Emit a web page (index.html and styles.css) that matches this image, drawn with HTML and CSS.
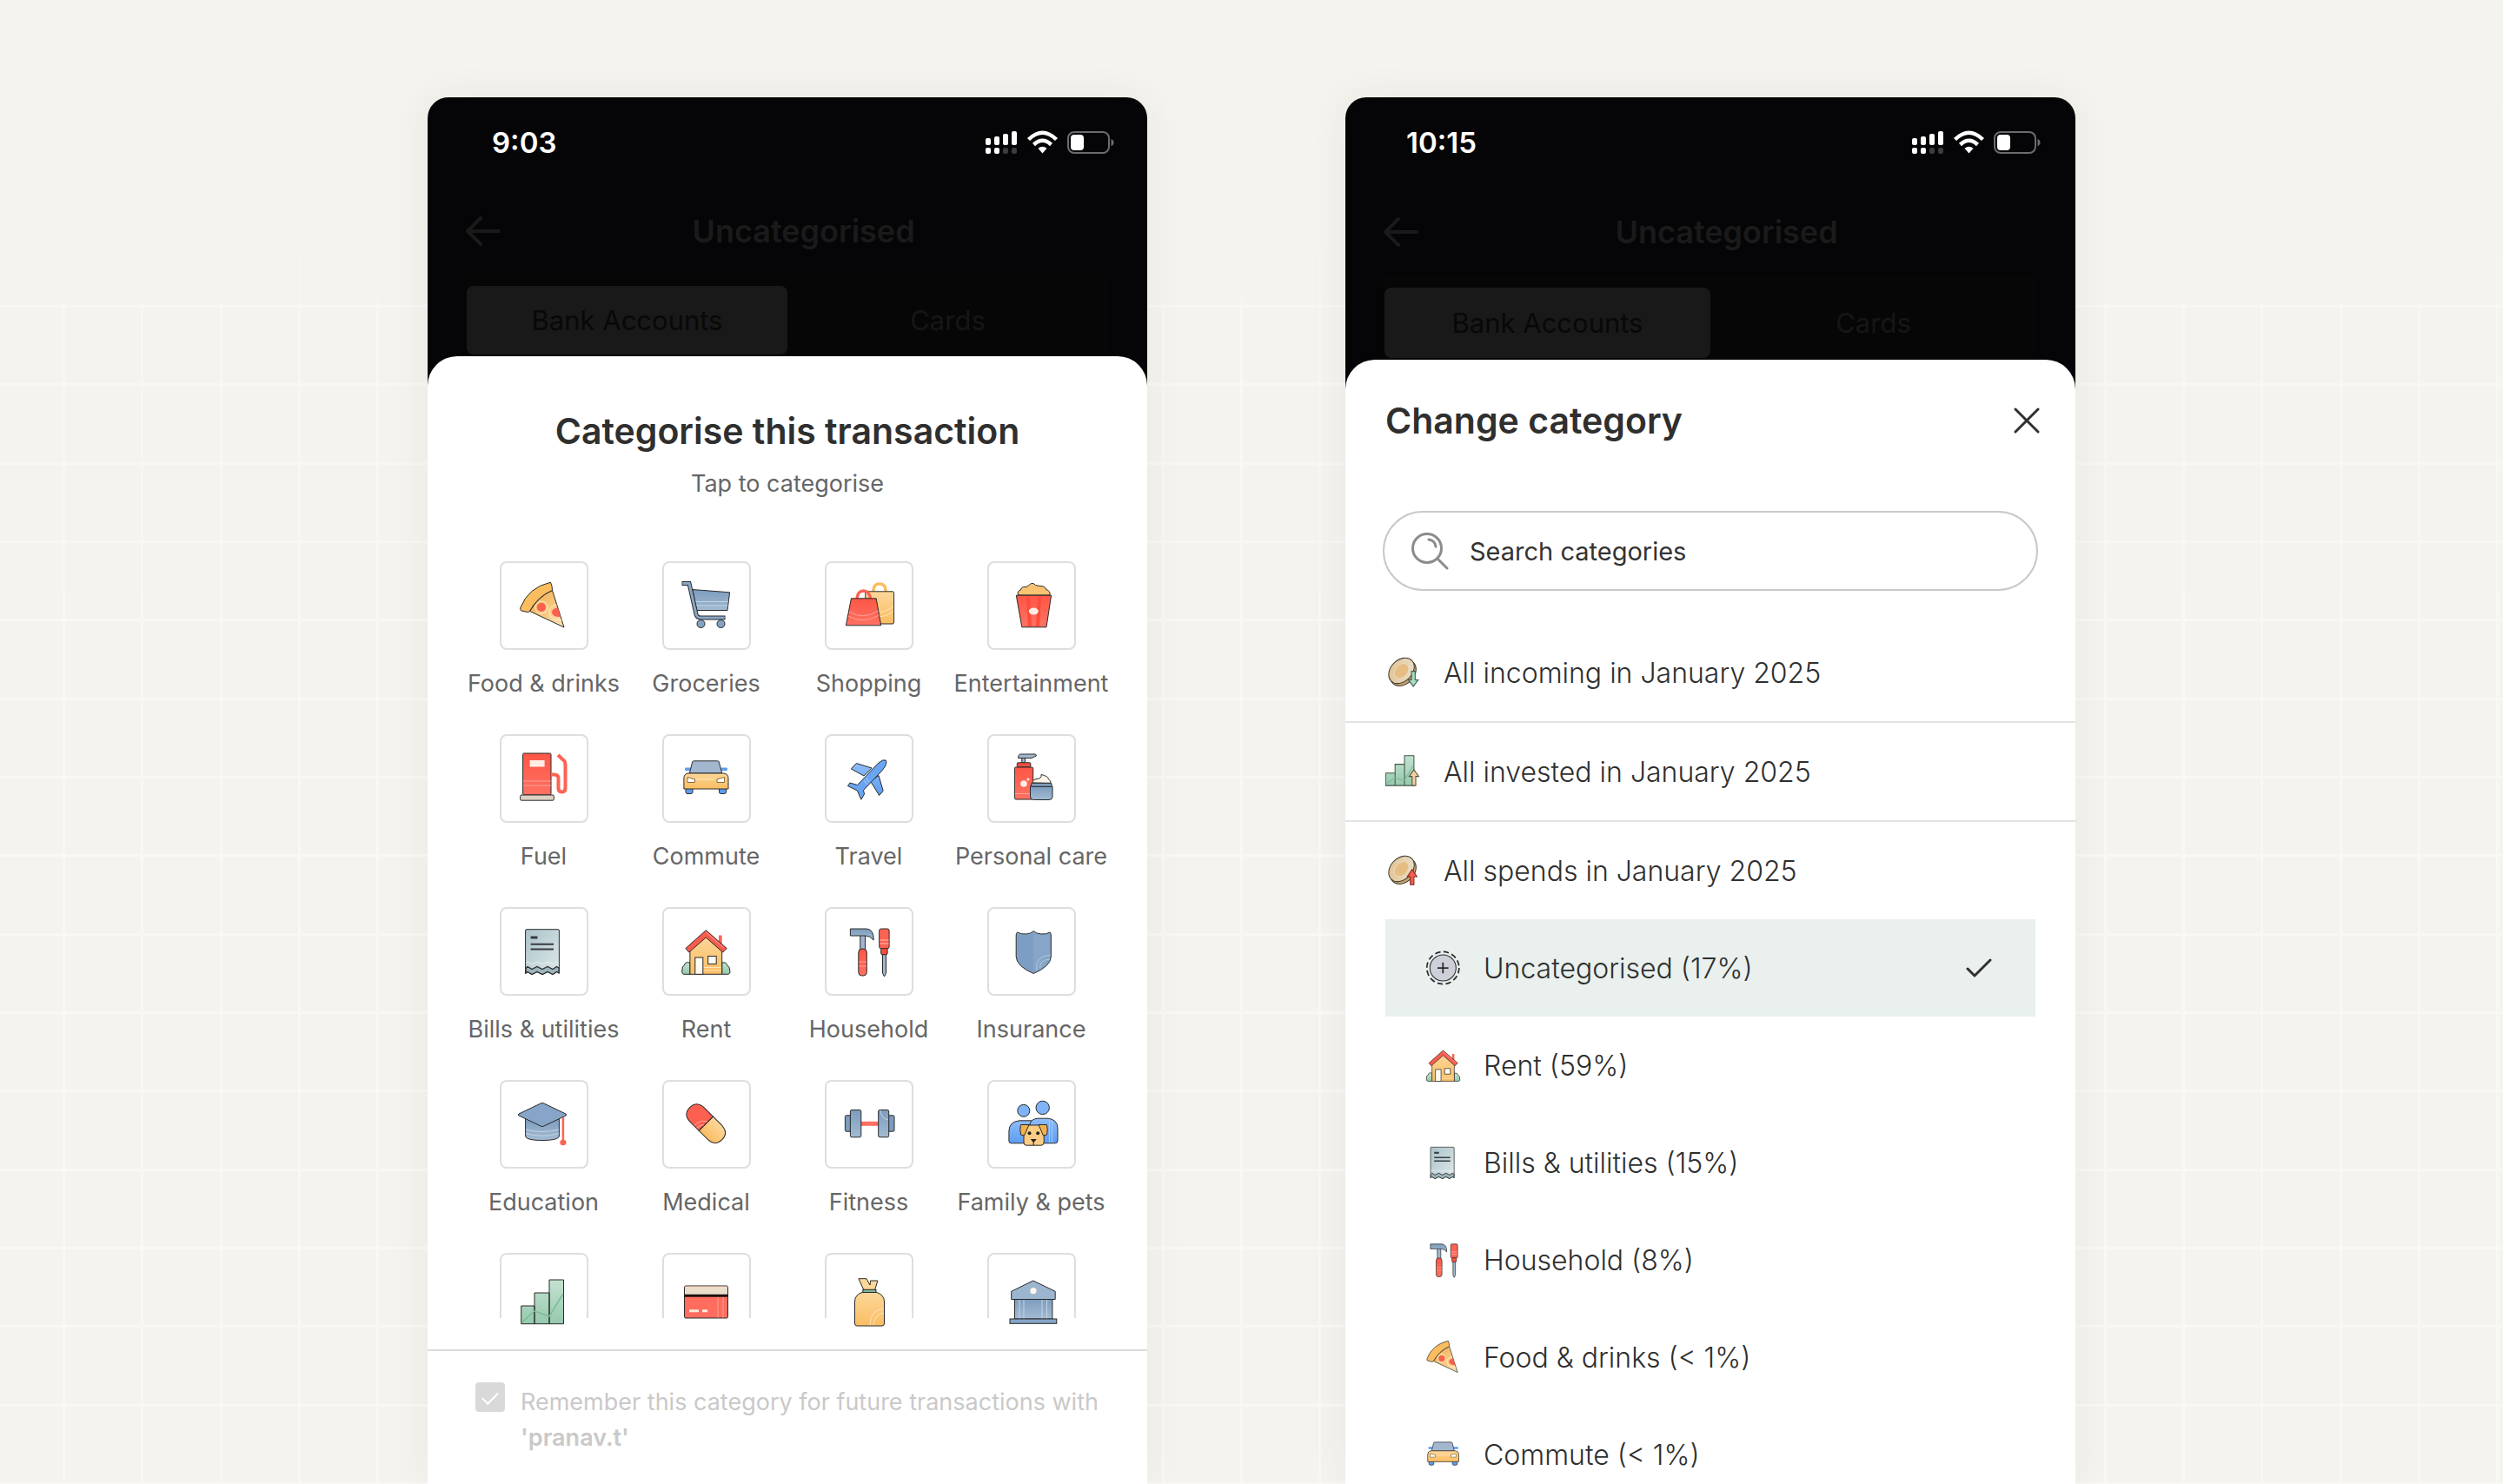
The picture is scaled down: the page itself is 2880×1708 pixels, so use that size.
FILE: index.html
```html
<!DOCTYPE html>
<html lang="en">

<head>
    <meta charset="UTF-8">
    <meta name="viewport" content="width=device-width, initial-scale=1.0">
    <title>Transaction categories</title>
    <link rel="stylesheet" href="styles.css">
</head>
<body>
    <!-- shared icons -->
    <svg class="sprite" aria-hidden="true">
        <defs>
            <linearGradient id="gYellow" x1="0" y1="0" x2="0" y2="1">
                <stop offset="0" stop-color="#fcd79a"/><stop offset="1" stop-color="#fabd62"/>
            </linearGradient>
            <linearGradient id="gSlice" x1="0" y1="0" x2="1" y2="1">
                <stop offset="0.2" stop-color="#f3b35a"/><stop offset="1" stop-color="#fee3b4"/>
            </linearGradient>
            <linearGradient id="gBlue" x1="0" y1="0" x2="0" y2="1">
                <stop offset="0" stop-color="#7c9cbd"/><stop offset="1" stop-color="#a3bbd3"/>
            </linearGradient>
            <linearGradient id="gSky" x1="0" y1="0" x2="0" y2="1">
                <stop offset="0" stop-color="#8ebcf8"/><stop offset="1" stop-color="#5c9df2"/>
            </linearGradient>
            <linearGradient id="gRed" x1="0" y1="0" x2="0" y2="1">
                <stop offset="0" stop-color="#fd5646"/><stop offset="1" stop-color="#fe7263"/>
            </linearGradient>
            <linearGradient id="gGreen" x1="0" y1="0" x2="0" y2="1">
                <stop offset="0" stop-color="#c4e2d0"/><stop offset="1" stop-color="#94c9ad"/>
            </linearGradient>
            <linearGradient id="gPaper" x1="0" y1="0" x2="1" y2="1">
                <stop offset="0" stop-color="#a9c3ca"/><stop offset="1" stop-color="#dfe8e8"/>
            </linearGradient>
            <linearGradient id="gCoin" x1="0" y1="1" x2="1" y2="0">
                <stop offset="0" stop-color="#e0c08c"/><stop offset="1" stop-color="#eae2d2"/>
            </linearGradient>
        </defs>

        <symbol id="food" viewBox="0 0 60 60">
            <path d="M39.5 12.5L53 55L13.6 36.5Q24 19 39.5 12.5Z" fill="url(#gSlice)" stroke="#2a2a2a"/>
            <circle cx="27" cy="32" r="7" fill="none" stroke="#fef0d2"/>
            <circle cx="27" cy="32" r="5" fill="#f9604f"/>
            <path d="M46 32.5Q39 33 39 38Q40 43.5 49 43Z" fill="#f9604f"/>
            <path d="M44.500 29Q35 31 36 38.500Q38 48 50.500 46.500" fill="none" stroke="#fef0d2"/>
            <path d="M37.500 3.200Q39.500 7 39.500 12.500Q23 19 13 37Q11.500 38 10 37.300L3.500 35.800Q2 35 3 32Q12 9 37.500 3.200Z" fill="#fbbd60" stroke="#2a2a2a"/>
        </symbol>

        <symbol id="groceries" viewBox="0 0 60 60">
            <path d="M13.800 11.500L56.600 14.800L54 35.500H18.800Z" fill="url(#gBlue)" stroke="#2a2a2a"/>
            <path d="M16.500 25.500H55M17.500 30H54.500" stroke="#c5d5e4" fill="none"/>
            <path d="M1.500 4.500H10L18 40Q19 44 23 44H51.500" fill="none" stroke="#2a2a2a" stroke-width="5"/>
            <path d="M2.300 4.500H10L18 40Q19 44 23 44H50.700" fill="none" stroke="#8aa8c6" stroke-width="3"/>
            <circle cx="23.500" cy="51" r="4.500" fill="#86a3c1" stroke="#2a2a2a"/>
            <circle cx="46.500" cy="51" r="4.500" fill="#86a3c1" stroke="#2a2a2a"/>
        </symbol>

        <symbol id="shopping" viewBox="0 0 60 60">
            <path d="M35 14V12Q35.500 5 42 5Q48.500 5 49 12V14" fill="none" stroke="#fbbd60" stroke-width="3.500"/>
            <path d="M25.800 13.800H57Q58.600 13.800 58.600 15.500V49Q58.600 51 57 51H26Z" fill="url(#gYellow)" stroke="#2a2a2a"/>
            <path d="M40 38Q52 37 58 30M41 43Q52 42 58 36" fill="none" stroke="#fee6bd"/>
            <path d="M16 22Q17 13 23.500 13Q30.500 13 31.500 22" fill="none" stroke="#fd6353" stroke-width="3.500"/>
            <path d="M9.400 21.800H38.200L43.700 52.800H3.400Z" fill="url(#gRed)" stroke="#2a2a2a" stroke-linejoin="round"/>
            <path d="M7 37Q23 47 40.500 36M6 42Q23 52 41.500 41" fill="none" stroke="#ffa195"/>
        </symbol>

        <symbol id="entertainment" viewBox="0 0 60 60">
            <path d="M14.500 18Q13 13 17.500 12Q18 8 23 8.500Q26 8 27.500 6Q31 2.500 34.500 6.500Q38 7.500 41 7.500Q46 8 46.500 11.500Q52 13 51 18Z" fill="#fac273" stroke="#2a2a2a"/>
            <path d="M12.300 18.200H52.600L47 54.800H18.800Z" fill="url(#gRed)" stroke="#2a2a2a" stroke-linejoin="round"/>
            <path d="M24 19.500H28L30 54H26ZM37 19.500H41L39 54H35Z" fill="#fb4c3d"/>
            <ellipse cx="32.300" cy="36.500" rx="5.500" ry="4" fill="#fdeee4"/>
        </symbol>

        <symbol id="fuel" viewBox="0 0 60 60">
            <rect x="5.600" y="1" width="32.400" height="48" rx="1.500" fill="url(#gRed)" stroke="#2a2a2a"/>
            <rect x="13.600" y="9" width="17" height="7.500" fill="#feeee5"/>
            <path d="M6 33H38M6 38H38" stroke="#ffa195"/>
            <rect x="2.600" y="49" width="38.800" height="6.200" rx="1.500" fill="#ded2c4" stroke="#2a2a2a"/>
            <path d="M46 3L53.500 10Q54.500 11.500 54.500 14V41Q54.500 45.500 50.500 45.500Q46.500 45.500 46.500 41V30Q46.500 25.500 42 25.500H38.500" fill="none" stroke="#fd6353" stroke-width="4"/>
        </symbol>

        <symbol id="commute" viewBox="0 0 60 60">
            <rect x="6" y="41" width="8" height="6.500" rx="2" fill="#5c9df2" stroke="#2a2a2a"/>
            <rect x="44.500" y="41" width="8" height="6.500" rx="2" fill="#5c9df2" stroke="#2a2a2a"/>
            <rect x="5" y="17.500" width="8" height="3.500" rx="1" fill="#5c9df2"/>
            <rect x="46" y="17.500" width="8" height="3.500" rx="1" fill="#5c9df2"/>
            <path d="M15.500 9.800H42.500Q44 9.800 44.300 11L47.700 24H10.300L13.700 11Q14 9.800 15.500 9.800Z" fill="#a2b7ce" stroke="#2a2a2a"/>
            <path d="M9 24H49.500Q55 24.500 55 30V42H3.900V30Q4 24.500 9 24Z" fill="url(#gYellow)" stroke="#2a2a2a"/>
            <path d="M18 31H40" stroke="#fee6bd"/>
            <path d="M8 28.500L16.500 31V34.500H8ZM50.500 28.500L42 31V34.500H50.500Z" fill="#fff" stroke="#8b6a3a"/>
        </symbol>

        <symbol id="travel" viewBox="0 0 60 60">
            <path d="M33.200 18L15.300 12.500L9.400 19L24 27ZM41 26.500L46.200 44.200L41.700 49.500L31.500 33Z" fill="url(#gSky)" stroke="#2a2a2a" stroke-linejoin="round"/>
            <path d="M41 12Q46 7.500 49 9Q51 11 48.500 16Q46 20 42 24L23.500 43.500L24.500 48L20.800 54.200L16.500 44L5.400 38.500L8 35L16.500 37.500Z" fill="#69a5f3" stroke="#2a2a2a" stroke-linejoin="round"/>
            <path d="M24 32L28 37M26.500 29.500L30.500 34.500" stroke="#b5d2fa" fill="none"/>
        </symbol>

        <symbol id="care" viewBox="0 0 60 60">
            <rect x="18.800" y="6" width="3.600" height="6" fill="#a2b7ce" stroke="#2a2a2a"/>
            <path d="M16.500 2H34Q35.500 2 35.300 4L30 6.500H14.500Q14.500 3 16.500 2Z" fill="#a2b7ce" stroke="#2a2a2a"/>
            <rect x="13.300" y="11.800" width="15.500" height="5" rx="1" fill="#fb4c3d" stroke="#2a2a2a"/>
            <rect x="10.400" y="17" width="21.300" height="37" rx="1.500" fill="url(#gRed)" stroke="#2a2a2a"/>
            <circle cx="21" cy="36" r="3.800" fill="#feeee5"/><circle cx="26" cy="31" r="1.500" fill="#feeee5"/>
            <path d="M11 47.500H31" stroke="#ffa195"/>
            <path d="M31 35Q31 31 36 30.500Q42 30 41 25.500Q49 27 49.500 31Q52.500 32.500 52 35.500Z" fill="#fff4e8" stroke="#2a2a2a"/>
            <path d="M28.500 39H54V51Q54 54.500 50 54.500H32.500Q28.500 54.500 28.500 51Z" fill="url(#gBlue)" stroke="#2a2a2a"/>
            <rect x="29.500" y="35.300" width="23.500" height="4" rx="1" fill="#7c9cbd" stroke="#2a2a2a"/>
        </symbol>

        <symbol id="bills" viewBox="0 0 60 60">
            <path d="M10 4.700H46Q47.400 4.700 47.400 6V55L44.500 53.500L40 56.500L34 53.500L28 56.500L22 53.500L16 56.500L11 53.500L8.600 55.500V6Q8.600 4.700 10 4.700Z" fill="url(#gPaper)" stroke="#2a2a2a"/>
            <path d="M9 49.500L11 47.500L16 50.500L22 47.500L28 50.500L34 47.500L40 50.500L44.500 47.500L47 49V55L44.500 53.500L40 56.500L34 53.500L28 56.500L22 53.500L16 56.500L11 53.500L9 55Z" fill="#9db5bc" stroke="#2a2a2a" stroke-width="1.200"/>
            <path d="M9 43.500L11 42L16 44.500L22 42L28 44.500L34 42L40 44.500L44.500 42L47 43" fill="none" stroke="#e7eff0"/>
            <path d="M14.600 14H22.500" stroke="#363b40" stroke-width="3"/>
            <path d="M14.600 21.700H41M14.600 27.400H41" stroke="#363b40" stroke-width="2"/>
        </symbol>

        <symbol id="rent" viewBox="0 0 60 60">
            <path d="M11 43Q5 41.500 4.500 46Q1.500 47 2 51Q1 56 4 56.300H11ZM47.700 43Q53 42 54 46.500Q57 48 56.500 51Q58 56 54.500 56.300H47.700Z" fill="url(#gGreen)" stroke="#2a2a2a"/>
            <rect x="44" y="11.500" width="3.700" height="12" fill="#fd6353"/>
            <path d="M10.900 27L29.300 11L47.700 27V56.300H10.900Z" fill="url(#gYellow)" stroke="#2a2a2a"/>
            <path d="M26 48.500H47M26 52H47" stroke="#fee6bd"/>
            <path d="M29.300 5.700L53.200 26.500L48.700 31L29.300 14L9.800 31L5.900 26.500Z" fill="#fb5b4c" stroke="#2a2a2a" stroke-linejoin="round"/>
            <path d="M29.300 8L50 26" stroke="#ffa195" fill="none"/>
            <rect x="16.800" y="37" width="9" height="19.300" fill="#fffaf2" stroke="#2a2a2a"/>
            <rect x="31.700" y="35.500" width="9.500" height="9" fill="#fffaf2" stroke="#2a2a2a"/>
        </symbol>

        <symbol id="household" viewBox="0 0 60 60">
            <rect x="19.800" y="11" width="5.700" height="17" fill="#a2b7ce" stroke="#2a2a2a"/>
            <path d="M8.400 4H27Q35.500 4.500 35.200 17Q31 12 26 12H8.400Z" fill="url(#gBlue)" stroke="#2a2a2a"/>
            <rect x="17.800" y="27" width="9.500" height="31" rx="4" fill="url(#gRed)" stroke="#2a2a2a"/>
            <path d="M18.500 42H27M18.500 47H27" stroke="#ffa195"/>
            <path d="M45.500 33H49.500V55L47.500 59L45.500 55Z" fill="#a2b7ce" stroke="#2a2a2a"/>
            <rect x="43.700" y="26" width="7.400" height="7.700" rx="1.500" fill="#fb4c3d" stroke="#2a2a2a"/>
            <rect x="41.700" y="4" width="11.400" height="22.700" rx="2" fill="#fd6353" stroke="#2a2a2a"/>
            <path d="M42.500 17H52.500M42.500 21H52.500" stroke="#ffa195" stroke-width="1.500"/>
        </symbol>

        <symbol id="insurance" viewBox="0 0 60 60">
            <path d="M32.200 6.700Q35 9.500 41 10Q47 10.500 51 8Q52.500 9 52.300 12V36Q52 47 32.200 55.500Q12.500 47 12.200 36V12Q12 9 13.500 8Q18 10.500 24 10Q29.500 9.500 32.200 6.700Z" fill="#86a5c8" stroke="#2a2a2a"/>
            <path d="M32.200 9Q27 12 13.500 11V36Q14 46 32.200 54Z" fill="#7d9ec4"/>
            <path d="M36 52Q33 36 51.500 34M40 49.500Q38 40 51 39" fill="none" stroke="#b1c7dd"/>
        </symbol>

        <symbol id="education" viewBox="0 0 60 60">
            <path d="M8.600 22H47.400V44Q46 48.500 28 48.500Q10 48.500 8.600 44Z" fill="url(#gBlue)" stroke="#2a2a2a"/>
            <path d="M9 36Q28 41 47 36M9 40.500Q28 46 47 40.500" fill="none" stroke="#c5d5e4"/>
            <path d="M26.500 5.800Q28 5 29.500 5.800L55 18Q56.500 19 55 20L29.500 32.200Q28 33 26.500 32.200L1 20Q-0.500 19 1 18Z" fill="#86a5c8" stroke="#2a2a2a"/>
            <path d="M51.900 22V50" stroke="#fd6353" stroke-width="2.500"/>
            <ellipse cx="51.900" cy="51" rx="3.600" ry="3.200" fill="#fd6353"/>
        </symbol>

        <symbol id="medical" viewBox="0 0 60 60">
            <g transform="rotate(45 29.300 29.200)">
                <path d="M29.300 17.700H44Q55.500 18.500 55.500 29.200Q55.500 40 44 40.700H29.300Z" fill="url(#gYellow)" stroke="#2a2a2a"/>
                <path d="M29.300 17.700H14.500Q3 18.500 3 29.200Q3 40 14.500 40.700H29.300Z" fill="#fd6051" stroke="#2a2a2a"/>
                <path d="M29 27Q22 29 21.500 40M29 32Q26 34 25.500 40" fill="none" stroke="#ffa195"/>
            </g>
        </symbol>

        <symbol id="fitness" viewBox="0 0 60 60">
            <rect x="20" y="26.800" width="21" height="5" fill="#fd6f61"/>
            <rect x="2.400" y="19.800" width="8" height="18.400" rx="1.500" fill="#7c9cbd" stroke="#2a2a2a"/>
            <rect x="51" y="19.800" width="8" height="18.400" rx="1.500" fill="#7c9cbd" stroke="#2a2a2a"/>
            <rect x="8.400" y="13.500" width="12.400" height="31.300" rx="1.500" fill="url(#gBlue)" stroke="#2a2a2a"/>
            <rect x="40.700" y="13.500" width="12" height="31.300" rx="1.500" fill="url(#gBlue)" stroke="#2a2a2a"/>
            <path d="M43 14Q43.500 23 52 25" fill="none" stroke="#c5d5e4"/>
        </symbol>

        <symbol id="family" viewBox="0 0 60 60">
            <circle cx="20.800" cy="14.300" r="7" fill="#7fb3f7" stroke="#2a2a2a"/>
            <circle cx="42.700" cy="10.900" r="7.700" fill="#7fb3f7" stroke="#2a2a2a"/>
            <path d="M16 25.800H30V51.800H6.500Q3.900 51.800 3.900 49V38Q4 27 16 25.800Z" fill="url(#gSky)" stroke="#2a2a2a"/>
            <path d="M37 23.200H49Q60 24.500 60 35V49Q60 51.800 57 51.800H28V30Q29 24 37 23.200Z" fill="url(#gSky)" stroke="#2a2a2a"/>
            <path d="M50.500 24V51M53.500 25V51" stroke="#a9cbfb"/>
            <path d="M21 31H44.200V51Q44 54.200 41 54.200H24Q21 54.200 21 51Z" fill="#fccd83" stroke="#2a2a2a"/>
            <path d="M17.500 30.500H27L21.500 43L17.500 42Q16 36 17.500 30.500ZM47.500 30.500H38L43.500 43L47.500 42Q49 36 47.500 30.500Z" fill="#f3b04e" stroke="#2a2a2a"/>
            <circle cx="27.500" cy="40.200" r="2" fill="#222"/><circle cx="37.200" cy="40.200" r="2" fill="#222"/>
            <path d="M29.500 47.500H35L32.200 50.500ZM32.200 50V54" fill="#222" stroke="#222"/>
        </symbol>

        <symbol id="investment" viewBox="0 0 60 60">
            <path d="M3.700 40H19V60.700H3.700ZM19 25H36V60.700H19ZM36 10H52.500V60.700H36Z" fill="url(#gGreen)" stroke="#2a2a2a"/>
            <path d="M4.500 59L19 46L36 52L52 26" fill="none" stroke="#7fb89b" stroke-width="1.500"/>
        </symbol>

        <symbol id="card" viewBox="0 0 60 60">
            <rect x="4.500" y="17" width="50" height="37" rx="1.500" fill="#fe6d5e" stroke="#2a2a2a"/>
            <path d="M5 18.500Q5 17.500 6 17.500H53Q54 17.500 54 18.500V27H5Z" fill="#eaddca"/>
            <path d="M4.500 28.300H54.500" stroke="#1c1210" stroke-width="3"/>
            <path d="M10 45.700H21M25 45.700H31" stroke="#ffe8de" stroke-width="3"/>
            <path d="M43 30V53.500M49 30V53.500" stroke="#ffa195"/>
        </symbol>

        <symbol id="cash" viewBox="0 0 60 60">
            <path d="M17.900 8.700H27L31 16L31.600 11H39.900L36.500 22H24Z" fill="#fcd79a" stroke="#2a2a2a" stroke-linejoin="round"/>
            <path d="M23 24H37.500Q47.500 27 47.500 35V60Q47.500 63 45 63H16Q13.500 63 13.500 60V35Q13.500 27 23 24Z" fill="url(#gYellow)" stroke="#2a2a2a"/>
            <rect x="22.900" y="21.300" width="15" height="3.200" fill="#7fb89b" stroke="#2a2a2a"/>
            <path d="M31 62Q31 45 47 43M35 62Q36 50 47 48" fill="none" stroke="#fee6bd"/>
        </symbol>

        <symbol id="bank" viewBox="0 0 60 60">
            <rect x="10.500" y="32" width="43.400" height="23" fill="url(#gBlue)" stroke="#2a2a2a"/>
            <path d="M16 33V55M21 33V55M42 33V55M47.500 33V55" stroke="#c5d5e4"/>
            <path d="M6.700 23.300L31.800 11L57.200 23.300V32.500H6.700Z" fill="#9db6d0" stroke="#2a2a2a" stroke-linejoin="round"/>
            <rect x="5" y="55" width="53.800" height="5.300" fill="#86a5c8" stroke="#2a2a2a"/>
            <circle cx="32" cy="22.700" r="3.600" fill="#fff6ee"/>
        </symbol>

        <symbol id="coin" viewBox="0 0 60 60">
            <ellipse cx="29.500" cy="31" rx="17.500" ry="24" transform="rotate(45 29.500 31)" fill="#c9a66f" stroke="#4a4237" stroke-width="1.500"/>
            <ellipse cx="26.500" cy="27" rx="17.500" ry="24" transform="rotate(45 26.500 27)" fill="url(#gCoin)" stroke="#4a4237" stroke-width="1.500"/>
            <ellipse cx="26.500" cy="27.500" rx="10" ry="14" transform="rotate(42 26.500 27.500)" fill="#e6bd83" stroke="#f0e2c8"/>
        </symbol>

        <symbol id="incoming" viewBox="0 0 60 60">
            <use href="#coin"/>
            <path d="M43 28H49V42H54L46 53L38 42H43Z" fill="#a9dcc4" stroke="#3f5a4d" stroke-width="1.500"/>
        </symbol>

        <symbol id="spends" viewBox="0 0 60 60">
            <use href="#coin"/>
            <path d="M41 53H47V40H52L44 28L36 40H41Z" fill="#fb5b4c" stroke="#7c2d25" stroke-width="1.500"/>
        </symbol>

        <symbol id="invested" viewBox="0 0 60 60">
            <path d="M0.500 32.500H16V53H0.500ZM16 18H31.500V53H16ZM31.500 4H47V53H31.500Z" fill="url(#gGreen)" stroke="#41584c" stroke-width="1.500"/>
            <path d="M1 50L16 40L31 45L46 20" fill="none" stroke="#7fb89b" stroke-width="1.500"/>
            <path d="M44 53H50V38H55L47 27L39 38H44Z" fill="#ecd2a4" stroke="#5d5039" stroke-width="1.500"/>
        </symbol>

        <symbol id="uncategorised" viewBox="0 0 60 60">
            <circle cx="29" cy="30" r="26.500" fill="none" stroke="#2a2a2a" stroke-width="2.500" stroke-dasharray="9 4.870"/>
            <circle cx="29" cy="30" r="21.500" fill="#cdd0d8" stroke="#2a2a2a" stroke-width="1.500"/>
            <path d="M29 21V39M20 30H38" stroke="#2a2a2a" stroke-width="2.500"/>
        </symbol>

        <symbol id="back" viewBox="0 0 42 36">
            <path d="M18 3L3 18L18 33M3 18H39" fill="none" stroke="currentColor" stroke-width="4" stroke-linecap="round" stroke-linejoin="round"/>
        </symbol>

        <!-- signal, wifi and battery -->
        <symbol id="phoneStatus" viewBox="0 0 148 28">
            <g fill="#fff">
                <rect x="0" y="9" width="6" height="8" rx="2"/><rect x="10" y="7" width="6" height="10" rx="2"/>
                <rect x="20" y="4" width="6" height="13" rx="2"/><rect x="30" y="1" width="6" height="16" rx="2"/>
                <rect x="0" y="20" width="6" height="7" rx="2"/><rect x="10" y="20" width="6" height="7" rx="2"/>
                <path d="M65.500 26.500L60.500 20.800Q65.500 16.500 70.500 20.800Z"/>
            </g>
            <g fill="#3c3c3e">
                <rect x="20" y="20" width="6" height="7" rx="2"/><rect x="30" y="20" width="6" height="7" rx="2"/>
            </g>
            <path d="M49.500 10.500Q65.500 -5 81.500 10.500M55.500 16.500Q65.500 7 75.500 16.500" fill="none" stroke="#fff" stroke-width="4.500"/>
            <rect x="95" y="2" width="47" height="24" rx="7" fill="none" stroke="#6c6c6e" stroke-width="2"/>
            <path d="M144.500 10Q147.500 11 147.500 14Q147.500 17 144.500 18Z" fill="#6c6c6e"/>
            <rect x="98" y="5" width="15" height="18" rx="4" fill="#fff"/>
        </symbol>
    </svg>

    <main class="showcase">
        <section class="phone">
            <div class="status-bar">
                <span class="time">9:03</span>
                <svg class="status-icons"><use href="#phoneStatus"/></svg>
            </div>
            <header class="nav">
                <button class="back" aria-label="Back"><svg class="back-icon"><use href="#back"/></svg></button>
                <h2 class="nav-title">Uncategorised</h2>
            </header>
            <div class="tabs">
                <button class="tab active">Bank Accounts</button>
                <button class="tab">Cards</button>
            </div>
            <div class="sheet">
                <h1 class="sheet-title centered">Categorise this transaction</h1>
                <p class="subtitle">Tap to categorise</p>
                <div class="categories">
                    <button class="category"><span class="tile"><svg class="icon"><use href="#food"/></svg></span><span class="label">Food &amp; drinks</span></button>
                    <button class="category"><span class="tile"><svg class="icon"><use href="#groceries"/></svg></span><span class="label">Groceries</span></button>
                    <button class="category"><span class="tile"><svg class="icon"><use href="#shopping"/></svg></span><span class="label">Shopping</span></button>
                    <button class="category"><span class="tile"><svg class="icon"><use href="#entertainment"/></svg></span><span class="label">Entertainment</span></button>
                    <button class="category"><span class="tile"><svg class="icon"><use href="#fuel"/></svg></span><span class="label">Fuel</span></button>
                    <button class="category"><span class="tile"><svg class="icon"><use href="#commute"/></svg></span><span class="label">Commute</span></button>
                    <button class="category"><span class="tile"><svg class="icon"><use href="#travel"/></svg></span><span class="label">Travel</span></button>
                    <button class="category"><span class="tile"><svg class="icon"><use href="#care"/></svg></span><span class="label">Personal care</span></button>
                    <button class="category"><span class="tile"><svg class="icon"><use href="#bills"/></svg></span><span class="label">Bills &amp; utilities</span></button>
                    <button class="category"><span class="tile"><svg class="icon"><use href="#rent"/></svg></span><span class="label">Rent</span></button>
                    <button class="category"><span class="tile"><svg class="icon"><use href="#household"/></svg></span><span class="label">Household</span></button>
                    <button class="category"><span class="tile"><svg class="icon"><use href="#insurance"/></svg></span><span class="label">Insurance</span></button>
                    <button class="category"><span class="tile"><svg class="icon"><use href="#education"/></svg></span><span class="label">Education</span></button>
                    <button class="category"><span class="tile"><svg class="icon"><use href="#medical"/></svg></span><span class="label">Medical</span></button>
                    <button class="category"><span class="tile"><svg class="icon"><use href="#fitness"/></svg></span><span class="label">Fitness</span></button>
                    <button class="category"><span class="tile"><svg class="icon"><use href="#family"/></svg></span><span class="label">Family &amp; pets</span></button>
                    <button class="category" aria-label="Investments"><span class="tile cut"><svg class="icon"><use href="#investment"/></svg></span></button>
                    <button class="category" aria-label="Card bills"><span class="tile cut"><svg class="icon"><use href="#card"/></svg></span></button>
                    <button class="category" aria-label="Cash"><span class="tile cut"><svg class="icon"><use href="#cash"/></svg></span></button>
                    <button class="category" aria-label="Bank"><span class="tile cut"><svg class="icon"><use href="#bank"/></svg></span></button>
                </div>
                <div class="remember">
                    <input type="checkbox" id="remember" class="check" checked>
                    <label for="remember" class="remember-text">Remember this category for future transactions with <b>'pranav.t'</b></label>
                </div>
            </div>
        </section>

        <section class="phone wide">
            <div class="status-bar">
                <span class="time">10:15</span>
                <svg class="status-icons"><use href="#phoneStatus"/></svg>
            </div>
            <header class="nav">
                <button class="back" aria-label="Back"><svg class="back-icon"><use href="#back"/></svg></button>
                <h2 class="nav-title">Uncategorised</h2>
            </header>
            <div class="tabs">
                <button class="tab active">Bank Accounts</button>
                <button class="tab">Cards</button>
            </div>
            <div class="sheet">
                <div class="sheet-head">
                    <h1 class="sheet-title">Change category</h1>
                    <button class="close" aria-label="Close">
                        <svg class="close-icon" viewBox="0 0 30 30"><path d="M2 2L28 28M28 2L2 28" stroke="#2f2f2f" stroke-width="3" stroke-linecap="round"/></svg>
                    </button>
                </div>
                <div class="search">
                    <svg class="search-icon" viewBox="0 0 44 44" fill="none" stroke="#8c8c8c" stroke-width="3" stroke-linecap="round">
                        <circle cx="19" cy="19" r="16.500"/><path d="M31 31L42 42M21 9Q28 10 29 17"/>
                    </svg>
                    <input type="text" class="search-box" placeholder="Search categories" aria-label="Search categories">
                </div>
                <div class="groups">
                    <button class="group"><svg class="row-icon"><use href="#incoming"/></svg>All incoming in January 2025</button>
                    <button class="group"><svg class="row-icon"><use href="#invested"/></svg>All invested in January 2025</button>
                    <button class="group"><svg class="row-icon"><use href="#spends"/></svg>All spends in January 2025</button>
                </div>
                <div class="options">
                    <button class="option selected"><svg class="row-icon"><use href="#uncategorised"/></svg>Uncategorised (17%)
                        <svg class="tick" viewBox="0 0 30 22"><path d="M2 12L10 20L28 2" fill="none" stroke="#2f2f2f" stroke-width="3" stroke-linecap="round" stroke-linejoin="round"/></svg>
                    </button>
                    <button class="option"><svg class="row-icon"><use href="#rent"/></svg>Rent (59%)</button>
                    <button class="option"><svg class="row-icon"><use href="#bills"/></svg>Bills &amp; utilities (15%)</button>
                    <button class="option"><svg class="row-icon"><use href="#household"/></svg>Household (8%)</button>
                    <button class="option"><svg class="row-icon"><use href="#food"/></svg>Food &amp; drinks (&lt; 1%)</button>
                    <button class="option"><svg class="row-icon"><use href="#commute"/></svg>Commute (&lt; 1%)</button>
                </div>
            </div>
        </section>
    </main>
</body>
</html>
```

FILE: styles.css
```css
* {
    box-sizing: border-box;
}

body {
    margin: 0;
    height: 100vh;
    overflow: hidden;
    background-color: #f4f3ee;
    font-family: Inter, "Open Sans", sans-serif;
    color: #2f2f2f;
}

h1, h2, p {
    margin: 0;
}

button {
    padding: 0;
    border: none;
    background: none;
    font: inherit;
    color: inherit;
    cursor: pointer;
}

svg {
    display: block;
    flex-shrink: 0;
}

.sprite {
    position: absolute;
    width: 0;
    height: 0;
}

.showcase {
    position: relative;
    display: flex;
    justify-content: center;
    gap: 228px;
    height: 100vh;
    padding: 112px 24px 0;
}

/* faint graph paper behind the phones */
.showcase::before {
    content: "";
    position: absolute;
    inset: 0;
    z-index: -1;
    background-image:
        linear-gradient(90deg, #f9f8f5 3px, transparent 3px, transparent 90px, #f9f8f5 90px, #f9f8f5 93px, transparent 93px, transparent 181px, #f9f8f5 181px, #f9f8f5 184px, transparent 184px),
        linear-gradient(#f9f8f5 3px, transparent 3px, transparent 90px, #f9f8f5 90px, #f9f8f5 93px, transparent 93px, transparent 181px, #f9f8f5 181px, #f9f8f5 184px, transparent 184px);
    background-size: 271px 271px;
    background-position: 72px 80px;
    -webkit-mask-image: linear-gradient(transparent, rgba(0, 0, 0, 0.2) 348px, rgba(0, 0, 0, 0.8) 350px, #000);
    mask-image: linear-gradient(transparent, rgba(0, 0, 0, 0.2) 348px, rgba(0, 0, 0, 0.8) 350px, #000);
}

.phone {
    display: flex;
    flex-direction: column;
    width: 828px;
    border-radius: 24px 24px 0 0;
    background: linear-gradient(#050507 400px, #fff 400px);
    box-shadow: 0 0 48px rgba(70, 50, 20, 0.06);
}

.phone.wide {
    width: 840px;
}

.status-bar {
    display: flex;
    flex-shrink: 0;
    align-items: center;
    justify-content: space-between;
    height: 104px;
    padding: 0 38px 0 74px;
}

.wide .status-bar {
    padding: 0 40px 0 70px;
}

.time {
    font-size: 33px;
    font-weight: 600;
    color: #fff;
}

.status-icons {
    width: 148px;
    height: 28px;
}

.nav {
    display: flex;
    flex-shrink: 0;
    align-items: center;
    height: 100px;
    padding: 0 48px 0 43px;
    color: #1a1a1a;
}

.back-icon {
    width: 42px;
    height: 36px;
}

.nav-title {
    flex: 1;
    text-align: center;
    font-size: 36px;
    font-weight: 600;
}

.tabs {
    display: flex;
    flex-shrink: 0;
    height: 94px;
    margin: 0 45px;
    padding: 13px 0 2px;
    background-color: #060606;
}

.tab {
    flex: 1;
    border-radius: 8px;
    font-size: 31px;
    color: #161616;
}

.tab.active {
    background-color: #191919;
    color: #080808;
}

.wide .nav {
    height: 102px;
}

.wide .tabs {
    height: 96px;
}

.sheet {
    flex: 1;
    border-radius: 34px 34px 0 0;
    background-color: #fff;
}

.sheet-title {
    font-size: 41px;
    line-height: 52px;
    font-weight: 600;
}

.centered {
    padding-top: 60px;
    text-align: center;
}

.subtitle {
    margin-top: 18px;
    text-align: center;
    font-size: 27px;
    line-height: 34px;
    color: #666;
}

.categories {
    display: grid;
    grid-template-columns: repeat(4, 1fr);
    row-gap: 41px;
    padding: 72px 40px 36px;
}

.category {
    display: flex;
    flex-direction: column;
    align-items: center;
    gap: 22px;
}

.tile {
    display: flex;
    justify-content: center;
    width: 102px;
    height: 102px;
    padding-top: 19px;
    border: 2px solid #dedede;
    border-radius: 8px;
}

.tile.cut {
    height: 75px;
    border-bottom: none;
    border-radius: 8px 8px 0 0;
}

.icon {
    width: 60px;
    height: 60px;
    overflow: visible;
}

symbol {
    overflow: visible;
}

.label {
    font-size: 27px;
    line-height: 34px;
    color: #666;
    white-space: nowrap;
}

.remember {
    display: flex;
    gap: 18px;
    padding: 36px 48px 0 55px;
    border-top: 2px solid #dadada;
}

.check {
    appearance: none;
    flex-shrink: 0;
    display: flex;
    justify-content: center;
    width: 34px;
    height: 34px;
    margin: 0;
    border-radius: 4px;
    background-color: #d9d9d9;
}

.check:checked::before {
    content: "";
    width: 8px;
    height: 16px;
    margin-top: 7px;
    border: solid #fff;
    border-width: 0 2px 2px 0;
    transform: rotate(45deg);
}

.remember-text {
    padding-top: 2px;
    font-size: 27px;
    line-height: 41px;
    color: #c9c9c9;
}

.remember-text b {
    font-weight: 600;
}

.sheet-head {
    display: flex;
    align-items: center;
    justify-content: space-between;
    padding: 44px 41px 0 46px;
}

.close-icon {
    width: 30px;
    height: 30px;
}

.search {
    display: flex;
    align-items: center;
    gap: 24px;
    height: 92px;
    margin: 78px 43px 38px;
    padding: 0 30px;
    border: 2px solid #c9c9c9;
    border-radius: 46px;
}

.search-icon {
    width: 44px;
    height: 44px;
}

.search-box {
    flex: 1;
    padding: 0;
    border: none;
    outline: none;
    font: inherit;
    font-size: 29px;
    color: #333;
}

.search-box::placeholder {
    color: #333;
    opacity: 1;
}

.group,
.option {
    display: flex;
    align-items: center;
    gap: 25px;
    width: 100%;
    font-size: 32px;
    font-weight: 300;
    text-align: left;
}

.group {
    height: 114px;
    padding: 0 46px;
    border-bottom: 2px solid #e3e3e3;
}

.group:last-child {
    height: 112px;
    border-bottom: none;
}

.options {
    padding: 0 46px;
}

.option {
    height: 112px;
    padding: 0 50px 0 46px;
}

.selected {
    background-color: #e9f0ee;
}

.row-icon {
    width: 42px;
    height: 42px;
}

.tick {
    width: 30px;
    height: 22px;
    margin-left: auto;
}
```
